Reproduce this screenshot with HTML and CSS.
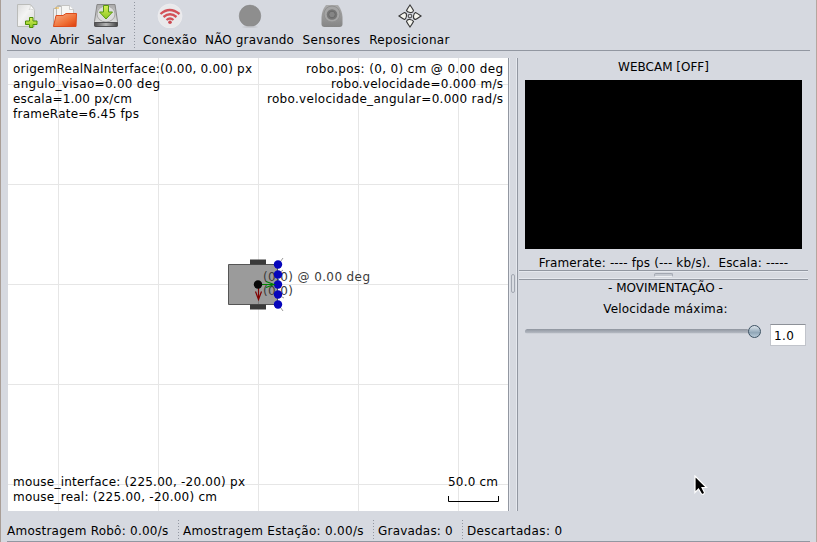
FILE: index.html
```html
<!DOCTYPE html>
<html lang="pt-BR">
<head>
<meta charset="utf-8">
<title>Robô</title>
<link rel="stylesheet" href="styles.css">
</head>
<body>
<div class="window">
  <header class="toolbar">
    <button class="tool novo">
      <svg width="24" height="28" viewBox="0 0 24 28"><defs><linearGradient id="paper" x2="1" y2="1"><stop stop-color="#ddd"/><stop offset=".45" stop-color="#f4f4f4"/><stop offset="1" stop-color="#d6d6d4"/></linearGradient><linearGradient id="green" x2="0" y2="1"><stop stop-color="#d8ee58"/><stop offset="1" stop-color="#8cc820"/></linearGradient></defs><path d="M3.500 4.500h13l4 5v17h-17z" fill="url(#paper)" stroke="#bbbcba"/><path d="M16 4.500c1 2 0 4-1 5 2-1 4 0 6 1z" fill="#fff" stroke="#c5c6c4" stroke-width=".6"/><path d="M15.500 17.500h3.500v3.500h4v3.500h-4v3h-3.500v-3h-4V21h4z" fill="url(#green)" stroke="#4c8d08"/></svg>
      <span>Novo</span></button>
    <button class="tool abrir">
      <svg width="26" height="28" viewBox="0 0 26 28"><defs><linearGradient id="orange" x2="1" y2="1"><stop stop-color="#f6b08a"/><stop offset=".6" stop-color="#f07035"/><stop offset="1" stop-color="#dd3d0c"/></linearGradient></defs><path d="M1.500 26.500V8.500h3l1-3h3l2 3" fill="#eee" stroke="#b7b8b7"/><path d="M4.500 25V6.500h11l3 3.500V25z" fill="#f3f3f1" stroke="#b9bab9"/><path d="M9.500 25V5.500h8l4 4v15.500z" fill="#f6f6f4" stroke="#c4c4c2"/><path d="M17.500 5.500v4h4" fill="#fff" stroke="#bbb" stroke-width=".7"/><path d="M1.500 26.500L4 15.500h7l3-2h10.500l-.5 13z" fill="url(#orange)" stroke="#dd4c1c"/><path d="M3 8h4" stroke="#eeb33c"/></svg>
      <span>Abrir</span></button>
    <button class="tool salvar">
      <svg width="26" height="28" viewBox="0 0 26 28"><defs><linearGradient id="disk" x2="0" y2="1"><stop stop-color="#aaa"/><stop offset="1" stop-color="#e7e7e7"/></linearGradient><linearGradient id="edge" x2="1"><stop stop-color="#4e4e50"/><stop offset=".5" stop-color="#b4b4b4"/><stop offset="1" stop-color="#444"/></linearGradient></defs><path d="M4 4.500h18l2.500 17v5h-23v-5z" fill="url(#disk)" stroke="#888"/><ellipse cx="13" cy="14" rx="9" ry="8" fill="#ddd" stroke="#aaa"/><path d="M1.500 22.500h23v3l-1 1h-21l-1-1z" fill="url(#edge)" stroke="#515153"/><path d="M10.500 5.500h5V12h4L13 19l-6.500-7h4z" fill="url(#green)" stroke="#579813"/></svg>
      <span>Salvar</span></button>
    <i class="tool-separator"></i>
    <button class="tool conexao">
      <svg width="26" height="28" viewBox="0 0 26 28"><circle cx="13" cy="16" r="12" fill="#e9e9eb" stroke="#f0f0f1" stroke-width=".6"/><g fill="none" stroke="#d35158" stroke-width="2.300"><path d="M3.500 14q9-8 19 0"/><path d="M6.500 17q6.500-5.500 13 0"/><path d="M9.500 20q3.500-3 7 0"/></g><circle cx="13" cy="22.300" r="1.800" fill="#cc4750"/></svg>
      <span>Conexão</span></button>
    <button class="tool gravando">
      <svg width="26" height="28" viewBox="0 0 26 28"><circle cx="13" cy="15.900" r="10.800" fill="#8e8e8e" stroke="#858585" stroke-width=".5"/><ellipse cx="13" cy="27" rx="8" ry=".8" fill="#c2c4c9"/></svg>
      <span>NÃO gravando</span></button>
    <button class="tool sensores">
      <svg width="26" height="28" viewBox="0 0 26 28"><defs><linearGradient id="sensor" x2="0" y2="1"><stop stop-color="#ababab"/><stop offset="1" stop-color="#858585"/></linearGradient></defs><path d="M7 5h12q4 5 4.500 12v7q0 3-3 3h-15q-3 0-3-3v-7Q3 10 7 5z" fill="url(#sensor)"/><circle cx="13" cy="14" r="8" fill="#a5a5a5" stroke="#909090"/><circle cx="13" cy="14.500" r="5.300" fill="#777"/><circle cx="13" cy="14.500" r="3.300" fill="#858585" stroke="#696969"/></svg>
      <span>Sensores</span></button>
    <button class="tool reposicionar">
      <svg width="26" height="28" viewBox="0 0 26 28"><g fill="#f4f4ee" stroke="#383838" stroke-width="1.150"><path id="arrow" d="M13 5q2.500 3.500 3.500 5.500-.5 2.500-3.500 2t-3.500-2q1-2 3.500-5.500z"/><use href="#arrow" transform="rotate(90 13 16)"/><use href="#arrow" transform="rotate(180 13 16)"/><use href="#arrow" transform="rotate(270 13 16)"/><circle cx="13" cy="16" r="1.800" fill="#d8dae0" stroke="#555"/></g></svg>
      <span>Reposicionar</span></button>
  </header>

  <main class="workspace">
    <svg class="map" viewBox="8 58 500 453">
      <path class="grid" d="M58.500 58v453M158.500 58v453M258.500 58v453M358.500 58v453M458.500 58v453M8 84.500h500M8 184.500h500M8 284.500h500M8 384.500h500M8 484.500h500"/>
      <path d="M228.500 264.500h49v40h-49z" fill="#9b9b9b" stroke="#555"/>
      <path d="M250 259.500h16v5h-16zM250 304.500h16v5h-16z" fill="#3a3a3a"/>
      <path d="M258 284.500h20M258.500 284v20" stroke="#7c7c7c"/>
      <g class="robot-text"><text x="263" y="281" textLength="107">(0,0) @ 0.00 deg</text><text x="263" y="295" textLength="30">(0,0)</text></g>
      <path d="M278 265l5-7M278 274l5-4M278 295l6 3M278 304l5 7" stroke="#999"/>
      <g fill="#0606bb"><circle cx="278" cy="264.500" r="4.200"/><circle cx="278" cy="274.500" r="4.200"/><circle cx="278" cy="284.500" r="4.200"/><circle cx="278" cy="294.500" r="4.200"/><circle cx="278" cy="304.500" r="4.200"/></g>
      <path d="M258 284.500h15M266 281.500l8 3-8 3" fill="none" stroke="#008200" stroke-width="1.200"/>
      <path d="M258.500 285v14M255.500 291.500l3 8 3-8" fill="none" stroke="#800000" stroke-width="1.200"/>
      <circle cx="258" cy="284.500" r="4.200" fill="#080808"/>
      <g class="map-text">
        <text x="13" y="73" textLength="239">origemRealNaInterface:(0.00, 0.00) px</text>
        <text x="13" y="88" textLength="147">angulo_visao=0.00 deg</text>
        <text x="13" y="103" textLength="119">escala=1.00 px/cm</text>
        <text x="13" y="118" textLength="126">frameRate=6.45 fps</text>
        <text x="306" y="73" textLength="197">robo.pos: (0, 0) cm @ 0.00 deg</text>
        <text x="331" y="88" textLength="172">robo.velocidade=0.000 m/s</text>
        <text x="267" y="103" textLength="236">robo.velocidade_angular=0.000 rad/s</text>
        <text x="13" y="486" textLength="232">mouse_interface: (225.00, -20.00) px</text>
        <text x="13" y="501" textLength="204">mouse_real: (225.00, -20.00) cm</text>
        <text x="448" y="486" textLength="50">50.0 cm</text>
      </g>
      <path d="M448.500 496v5.500h50V496" fill="none" stroke="#000"/>
    </svg>
    <div class="divider-v"><i class="grip-v"></i></div>
    <aside class="side">
      <section class="webcam">
        <h2>WEBCAM [OFF]</h2>
        <div class="video"></div>
        <p>Framerate: ---- fps (--- kb/s).&nbsp; Escala: -----</p>
      </section>
      <div class="divider-h"><i class="grip-h"></i></div>
      <section class="movement">
        <h2>- MOVIMENTAÇÃO -</h2>
        <label>Velocidade máxima:</label>
        <div class="speed">
          <div class="slider"><i class="track"></i><i class="knob"></i></div>
          <output>1.0</output>
        </div>
      </section>
    </aside>
  </main>

  <footer class="status">
    <span class="s-robot">Amostragem Robô: 0.00/s</span>
    <span class="s-station">Amostragem Estação: 0.00/s</span>
    <span class="s-saved">Gravadas: 0</span>
    <span class="s-dropped">Descartadas: 0</span>
  </footer>
</div>
<svg class="pointer" width="14" height="21" viewBox="0 0 14 21"><path d="M1 1v16.500l3.500-3.500 3 5q2.500 1 3-1.500L8 12.500h4.500z" fill="#000" stroke="#fff" stroke-width="1.200"/></svg>
</body>
</html>
```
FILE: styles.css
```css
* { box-sizing: border-box; }
body {
  margin: 0;
  font: 12px/15px "DejaVu Sans", sans-serif;
  color: #000;
  background: #d6d9e0;
}
.window {
  height: 542px;
  display: flex;
  flex-direction: column;
  border-left: 1px solid #a99e97;
  border-right: 1px solid #b5a69e;
  overflow: hidden;
}
h2, p { margin: 0; font: inherit; white-space: nowrap; }

.toolbar {
  height: 51px;
  margin: 0 6px;
  padding-left: 4px;
  display: flex;
  flex: none;
  border-bottom: 1px solid #9297a1;
}
.tool {
  border: 0;
  padding: 0;
  background: none;
  font: inherit;
  flex: none;
  display: flex;
  flex-direction: column;
  align-items: center;
  white-space: nowrap;
}
.tool svg { display: block; flex: none; }
.tool span { margin-top: 5px; }
.novo { width: 30px; }
.abrir { width: 29px; margin-left: 9px; }
.salvar { width: 38px; margin-left: 8px; }
.tool-separator {
  width: 1px;
  height: 46px;
  margin: 2px 8px 0 9px;
  background: repeating-linear-gradient(#9297a1 0 1px, transparent 1px 3px);
}
.conexao { width: 54px; letter-spacing: 0.25px; }
.gravando { width: 89px; margin-left: 8px; letter-spacing: 0.15px; }
.sensores { width: 59px; margin-left: 8px; letter-spacing: 0.45px; }
.reposicionar { width: 81px; margin-left: 8px; letter-spacing: 0.3px; }

.workspace {
  height: 453px;
  margin: 7px 0 0 7px;
  display: flex;
  flex: none;
}
.map { width: 500px; height: 453px; background: #fff; flex: none; }
.grid { fill: none; stroke: #e6e6e6; }
.map-text, .robot-text { font-size: 12px; fill: #000; }
.robot-text { fill: #3c3c3c; }
.divider-v {
  width: 10px;
  flex: none;
  display: flex;
  align-items: center;
  justify-content: center;
  border-left: 1px solid #9297a1;
  border-right: 1px solid #9297a1;
  box-shadow: inset 1px 0 #e5e8ee, inset -1px 0 #e5e8ee;
}
.grip-v {
  width: 4px;
  height: 19px;
  border: 1px solid #a2a7b1;
  border-radius: 2px;
  background: #d9dce2;
  margin-top: -3px;
}
.side { width: 290px; flex: none; margin-left: 1px; }
.webcam { height: 212px; padding: 2px 0 0 6px; }
.webcam h2 { width: 277px; text-align: center; }
.video { width: 277px; height: 169px; margin-top: 5px; background: #000; }
.webcam p { width: 277px; margin-top: 7px; text-align: center; letter-spacing: 0.14px; }
.divider-h {
  width: 289px;
  height: 10px;
  border-top: 1px solid #9297a1;
  border-bottom: 1px solid #9297a1;
  box-shadow: inset 0 1px #e5e8ee, inset 0 -1px #e5e8ee;
  display: flex;
  justify-content: center;
  padding-top: 2px;
}
.grip-h {
  width: 19px;
  height: 4px;
  border: 1px solid #a2a7b1;
  border-bottom-color: #eceef2;
  border-radius: 2px;
  background: #c5c9d1;
}
.movement { padding: 1px 3px 0 6px; }
.movement h2 { text-align: center; }
.movement label { display: block; margin-top: 6px; text-align: center; letter-spacing: 0.15px; }
.speed { display: flex; margin-top: 5px; }
.slider { display: flex; align-items: center; width: 238px; height: 19px; }
.track {
  width: 224px;
  height: 5px;
  border-radius: 3px;
  background: linear-gradient(#8f959f, #b4b9c2 80%, #e6e8ed);
}
.knob {
  width: 13px;
  height: 13px;
  margin-left: -1px;
  border: 1px solid #3d5263;
  border-radius: 50%;
  background: linear-gradient(#dce4eb, #91a7b8 60%, #b8cad8);
}
.speed output {
  width: 36px;
  height: 22px;
  margin: 2px 0 0 7px;
  padding: 4px 0 0 3px;
  border: 1px solid #c1c4cb;
  border-top-color: #8d9198;
  background: #fff;
  letter-spacing: 0.4px;
}
.status {
  height: 25px;
  margin: 6px 6px 0;
  padding-top: 7px;
  display: flex;
  flex: none;
  border-bottom: 1px solid #9297a1;
  white-space: nowrap;
}
.status span { height: 19px; margin-top: -4px; padding-top: 4px; }
.status span + span {
  padding-left: 5px;
  background: repeating-linear-gradient(#9297a1 0 1px, transparent 1px 3px) 0 0 / 1px 100% no-repeat;
}
.s-robot { width: 171px; letter-spacing: 0.24px; }
.s-station { width: 195px; letter-spacing: 0.3px; }
.s-saved { width: 89px; letter-spacing: 0.2px; }
.s-dropped { letter-spacing: 0.35px; }
.pointer { position: absolute; left: 694px; top: 475px; }
```
